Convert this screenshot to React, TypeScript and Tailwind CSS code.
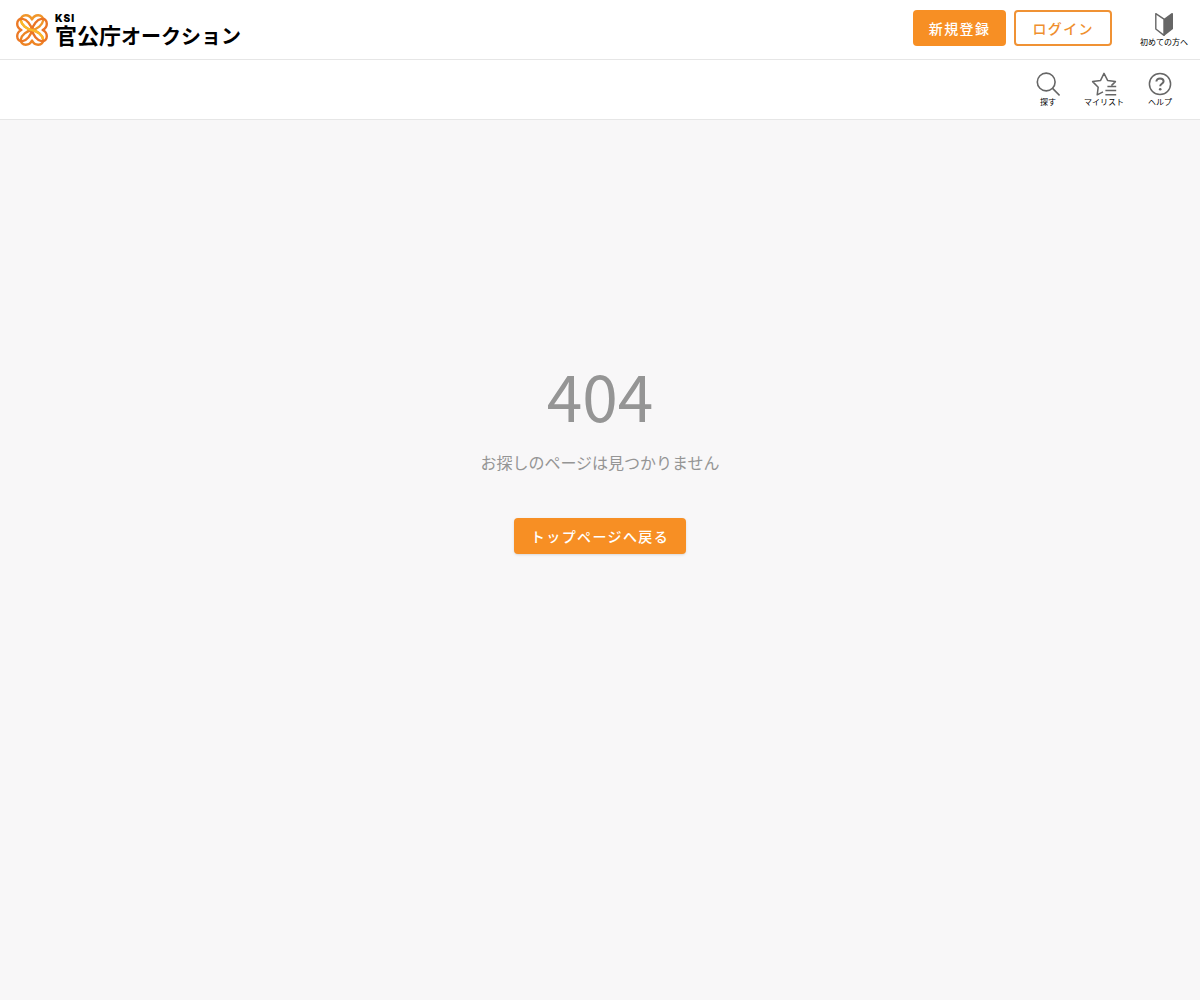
import type { ReactNode } from "react";

const HEART =
  "M20 20 C14.6 19 9.6 15 8.9 10.6 C8.4 7.4 10.6 5.2 13.8 5.2 C16.6 5.2 18.8 6.8 20 9.4 C21.2 6.8 23.4 5.2 26.2 5.2 C29.4 5.2 31.6 7.4 31.1 10.6 C30.4 15 25.4 19 20 20 Z";

/** Four interlaced hearts, one for each side. */
function LogoMark() {
  return (
    <svg viewBox="4 4 32 32" className="h-8 w-8 shrink-0" fill="none" strokeWidth="2.4" strokeLinejoin="round" aria-hidden="true">
      <path d={HEART} stroke="#f0962a" />
      <path d={HEART} stroke="#ee8424" transform="rotate(180 20 20)" />
      <path d={HEART} stroke="#ec7a26" transform="rotate(270 20 20)" />
      <path d={HEART} stroke="#ea7424" transform="rotate(90 20 20)" />
      <path d="M8.9 10.6 C9.6 15 14.6 19 20 20 C25.4 21 30.4 25 31.1 29.4" stroke="#fbb829" />
    </svg>
  );
}

function BeginnerIcon() {
  return (
    <svg viewBox="0 0 20 24" className="h-6 w-5" aria-hidden="true">
      <path d="M1.8 1.6 L10 7.2 V23.4 L1.8 17 Z" fill="#fff" stroke="#666" strokeWidth="1.4" strokeLinejoin="round" />
      <path d="M10 6.8 L17.4 1.2 Q19 0.6 19 2 V17 L10 24 Z" fill="#666" />
    </svg>
  );
}

function SearchIcon() {
  return (
    <svg viewBox="0 0 24 24" className="h-6 w-6" fill="none" stroke="#666" strokeWidth="1.6" aria-hidden="true">
      <circle cx="10.2" cy="10" r="8.9" />
      <path d="M16.6 16.4 L23.6 23.4" />
    </svg>
  );
}

function MyListIcon() {
  return (
    <svg viewBox="0 0 26 24" className="h-6 w-[26px]" fill="none" stroke="#666" strokeWidth="1.5" strokeLinejoin="round" aria-hidden="true">
      <path d="M12 19.8 L6.2 22.8 L7.2 15.2 L1.6 9.6 L9.6 8.4 L13 1.4 L16.6 8.4 L24.4 9.6 L20.4 13.6" />
      <path d="M16.4 14.4 H25.2 M14.4 18.6 H25.2 M14.4 22.8 H25.2" />
    </svg>
  );
}

function HelpIcon() {
  return (
    <svg viewBox="0 0 24 24" className="h-6 w-6" fill="none" stroke="#666" strokeWidth="1.5" aria-hidden="true">
      <circle cx="12" cy="12" r="10.6" />
      <path d="M8.4 9.6 C8.4 7.4 10 6.4 12 6.4 C14.2 6.4 15.6 7.4 15.6 9.2 C15.6 11.8 12.2 11.8 12.2 14.2" strokeWidth="2" />
      <circle cx="12.2" cy="17.2" r="1.3" fill="#666" stroke="none" />
    </svg>
  );
}

function IconLink({ label, icon }: { label: string; icon: ReactNode }) {
  return (
    <a href="#" className="flex w-14 flex-col items-center text-[8px] leading-3 whitespace-nowrap text-black">
      {icon}
      {label}
    </a>
  );
}

export default function App() {
  return (
    <div className="flex min-h-screen flex-col bg-[#f8f7f8] font-['Noto_Sans_CJK_JP',sans-serif]">
      <header className="bg-white">
        <div className="flex h-[60px] items-center justify-between border-b border-[#e6e6e6] pl-4">
          <a href="#" className="flex items-center gap-[7px] text-black">
            <LogoMark />
            <span className="flex flex-col">
              <span className="font-['Inter',sans-serif] text-[10px] leading-[10px] font-black tracking-widest">KSI</span>
              <span className="flex items-baseline leading-[22px] font-bold">
                <span className="text-[22px]">官公庁</span>
                <span className="text-[20px]">オークション</span>
              </span>
            </span>
          </a>
          <div className="flex items-center">
            <div className="flex gap-2 pb-1 text-sm font-medium tracking-widest">
              <button type="button" className="h-9 rounded bg-[#f78f24] px-4 text-white">
                新規登録
              </button>
              <button type="button" className="h-9 rounded border-2 border-[#f09234] bg-white px-4 text-[#ef8f2e]">
                ログイン
              </button>
            </div>
            <div className="ml-6 pr-2">
              <IconLink label="初めての方へ" icon={<BeginnerIcon />} />
            </div>
          </div>
        </div>
        <nav className="flex h-[60px] items-center justify-end border-b border-[#e6e6e6] pr-3">
          <IconLink label="探す" icon={<SearchIcon />} />
          <IconLink label="マイリスト" icon={<MyListIcon />} />
          <IconLink label="ヘルプ" icon={<HelpIcon />} />
        </nav>
      </header>

      <main className="flex flex-1 flex-col items-center pt-[242px] text-[#959595]">
        <h1 className="text-[64px] leading-16">404</h1>
        <p className="mt-6 text-base">お探しのページは見つかりません</p>
        <a
          href="#"
          className="mt-11 flex h-9 items-center rounded bg-[#f78f24] px-[17px] text-sm font-medium tracking-widest text-white shadow-sm"
        >
          トップページへ戻る
        </a>
      </main>
    </div>
  );
}
